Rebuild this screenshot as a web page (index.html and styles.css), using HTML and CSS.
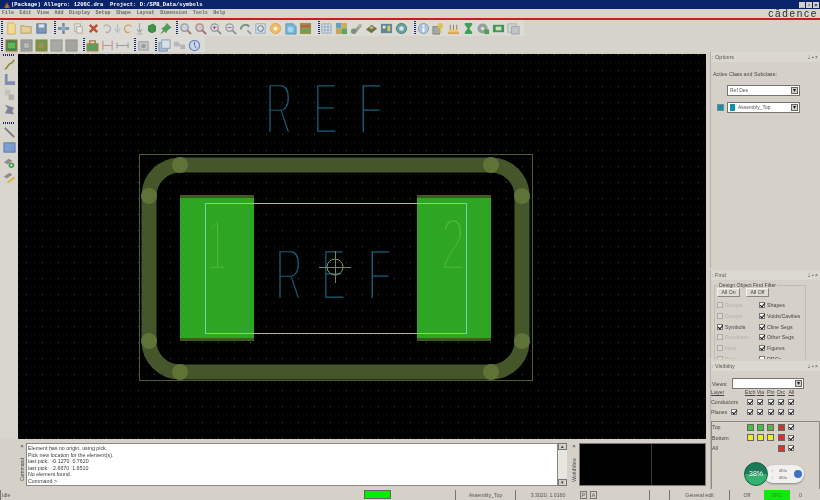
FILE: index.html
```html
<!DOCTYPE html>
<html lang="en">
<head>
<meta charset="utf-8">
<title>Allegro</title>
<link rel="stylesheet" href="styles.css">
</head>
<body>
<div class="app">
  <div class="title">
    <svg class="logo" viewBox="0 0 10 9"><path d="M1 8 5 1l4 7z" fill="#c8402c"/><path d="M3 8 5 4l2 4z" fill="#4caf50"/></svg>
    <span class="title-text">(Package) Allegro: 1206C.dra &nbsp;Project: D:/SPB_Data/symbols</span>
    <span class="winbtns"><i class="wb">_</i><i class="wb">▫</i><i class="wb">×</i></span>
  </div>
  <div class="menu">
    <span class="m">File</span><span class="m">Edit</span><span class="m">View</span><span class="m">Add</span><span class="m">Display</span><span class="m">Setup</span><span class="m">Shape</span><span class="m">Layout</span><span class="m">Dimension</span><span class="m">Tools</span><span class="m">Help</span>
    <span class="cadence">cādence</span>
  </div>

  <div class="bar">
    <div class="tools">
      <i class="grip g0"></i>
      <svg class="ic" viewBox="0 0 14 14"><path d="M3 1h6l2 2v10H3z" fill="#f3dc8c" stroke="#c9a750"/></svg>
      <svg class="ic" viewBox="0 0 14 14"><path d="M1 4h4l1 1h6v7H1z" fill="#e9cf8e" stroke="#a99668"/></svg>
      <svg class="ic" viewBox="0 0 14 14"><rect x="2" y="2" width="10" height="10" fill="#6f8fb5" stroke="#4d6b93"/><rect x="4" y="2.500" width="6" height="3.500" fill="#dfe6ee"/></svg>
      <i class="grip"></i>
      <svg class="ic" viewBox="0 0 14 14"><path d="M7 1v12M1 7h12" stroke="#5f7f9f" stroke-width="2.500"/><circle cx="7" cy="7" r="2.500" fill="#8fa8c0"/></svg>
      <svg class="ic" viewBox="0 0 14 14"><rect x="3" y="2" width="6" height="8" fill="#ece9e2" stroke="#a8a59c"/><rect x="5" y="5" width="6" height="7" fill="#ece9e2" stroke="#a8a59c"/></svg>
      <svg class="ic" viewBox="0 0 14 14"><path d="M3 3l8 8M11 3l-8 8" stroke="#b8401e" stroke-width="2.600"/></svg>
      <svg class="ic n" viewBox="0 0 12 14"><path d="M3 5a4 4 0 1 1 2 6" fill="none" stroke="#a9adb0" stroke-width="1.500"/></svg>
      <svg class="ic n" viewBox="0 0 12 14"><path d="M6 2v7M3 7l3 4 3-4" fill="none" stroke="#b3b8bd" stroke-width="1.300"/></svg>
      <svg class="ic n" viewBox="0 0 12 14"><path d="M9 5a4 4 0 1 0-2 6" fill="none" stroke="#d49b58" stroke-width="1.500"/></svg>
      <svg class="ic n" viewBox="0 0 12 14"><path d="M6 1v9M3 8l3 3 3-3M3 13h6" fill="none" stroke="#98a2ac" stroke-width="1.200"/></svg>
      <svg class="ic n2" viewBox="0 0 14 14"><path d="M3 4l5-2 3 2v6l-4 2-4-2z" fill="#2d8f3b" stroke="#1d6a2a"/></svg>
      <svg class="ic n2" viewBox="0 0 14 14"><path d="M8 1l5 5-2 1-3 3-1 2-2-2-4 3 3-4-2-2 2-1 3-3z" fill="#3c9a46" stroke="#2a6f33" stroke-width=".5"/></svg>
      <i class="grip g1"></i>
      <svg class="ic" viewBox="0 0 14 14"><circle cx="6" cy="6" r="4" fill="#cdd3da" stroke="#8b93a0" stroke-width="1.400"/><path d="M9 9l4 4" stroke="#9c6f6a" stroke-width="2"/></svg>
      <svg class="ic" viewBox="0 0 14 14"><circle cx="6" cy="6" r="4" fill="#d9c3c7" stroke="#a0808a" stroke-width="1.400"/><path d="M9 9l4 4" stroke="#9c5f6a" stroke-width="2"/></svg>
      <svg class="ic" viewBox="0 0 14 14"><circle cx="6" cy="6" r="4" fill="#d7dce0" stroke="#8a96a3" stroke-width="1.400"/><path d="M4 6h4M6 4v4" stroke="#a34" stroke-width=".9"/><path d="M9 9l4 4" stroke="#7d8a9a" stroke-width="2"/></svg>
      <svg class="ic" viewBox="0 0 14 14"><circle cx="6" cy="6" r="4" fill="#d7dce0" stroke="#8a96a3" stroke-width="1.400"/><path d="M4 6h4" stroke="#a34" stroke-width=".9"/><path d="M9 9l4 4" stroke="#7d8a9a" stroke-width="2"/></svg>
      <svg class="ic" viewBox="0 0 14 14"><path d="M2 8a5 5 0 0 1 9-3" fill="none" stroke="#6f8a7a" stroke-width="2"/><path d="M9 9l4 4" stroke="#8a96a3" stroke-width="2"/></svg>
      <svg class="ic" viewBox="0 0 14 14"><rect x="2" y="2" width="10" height="10" fill="#dfe4e8" stroke="#8ca0b6"/><circle cx="7" cy="7" r="3" fill="none" stroke="#5f7f9f" stroke-width="1.200"/></svg>
      <svg class="ic" viewBox="0 0 14 14"><circle cx="7" cy="7" r="5.500" fill="#efbd62" stroke="#d89a3e"/><circle cx="7" cy="7" r="2" fill="#fff3d9"/></svg>
      <svg class="ic" viewBox="0 0 14 14"><path d="M2 2h8l3 3v8H2z" fill="#6fb2d8" stroke="#4c8db4"/><circle cx="7" cy="8" r="3" fill="#a8d7ea"/></svg>
      <svg class="ic" viewBox="0 0 14 14"><rect x="1" y="1" width="12" height="12" fill="#8d8f3c"/><rect x="2" y="3" width="10" height="3" fill="#b8543c"/><rect x="2" y="8" width="10" height="3" fill="#5e9c48"/></svg>
      <i class="grip g2"></i>
      <svg class="ic n3" viewBox="0 0 14 14"><path d="M2 2h10v10H2zM5.300 2v10M8.600 2v10M2 5.300h10M2 8.600h10" fill="#d9e3ea" stroke="#7d9ab3" stroke-width=".8"/></svg>
      <svg class="ic" viewBox="0 0 14 14"><rect x="1" y="1" width="6" height="6" fill="#4d9fc4"/><rect x="7" y="1" width="6" height="6" fill="#d2a84a"/><rect x="1" y="7" width="6" height="6" fill="#c8a04a"/><rect x="7" y="7" width="6" height="6" fill="#4e9c5e"/></svg>
      <svg class="ic" viewBox="0 0 14 14"><path d="M2 11l9-9 1 3-6 7z" fill="#8c9a84"/><circle cx="4" cy="10" r="3" fill="#77866f"/><circle cx="11" cy="4" r="2" fill="#a8b2a0"/></svg>
      <svg class="ic" viewBox="0 0 14 14"><path d="M1 8l6-5 6 4-6 5z" fill="#5c6b3d"/><path d="M4 6l3-2 3 2-3 2z" fill="#b8a76a"/></svg>
      <svg class="ic" viewBox="0 0 14 14"><rect x="1" y="2" width="12" height="10" fill="#4f7f8f"/><rect x="3" y="4" width="3" height="3" fill="#e6e6e0"/><rect x="8" y="4" width="3" height="6" fill="#d8c55c"/></svg>
      <svg class="ic" viewBox="0 0 14 14"><circle cx="7" cy="7" r="5.500" fill="#5d9e9a" stroke="#37716e"/><circle cx="7" cy="7" r="2.500" fill="#d8e8e6"/></svg>
      <i class="grip g3"></i>
      <svg class="ic" viewBox="0 0 14 14"><circle cx="7" cy="7" r="5.500" fill="#a9bfdc" stroke="#7c97bb"/><rect x="6" y="3" width="2" height="2" fill="#fff"/><rect x="6" y="6" width="2" height="5" fill="#fff"/></svg>
      <svg class="ic" viewBox="0 0 14 14"><rect x="1" y="5" width="7" height="8" fill="#9ba69a" stroke="#6f7a6f"/><circle cx="9" cy="4" r="3" fill="#e3bb4a"/><rect x="8" y="6" width="2" height="6" fill="#e3bb4a"/></svg>
      <svg class="ic" viewBox="0 0 14 14"><path d="M1 11h12v2H1z" fill="#d89a38"/><path d="M2 8h10v3H2z" fill="#f0c466"/><path d="M3 3h1v5H3zM6.500 3h1v5h-1zM10 3h1v5h-1z" fill="#8a7240"/></svg>
      <svg class="ic" viewBox="0 0 14 14"><path d="M3 1h8v2L8 7l3 4v2H3v-2l3-4-3-4z" fill="#2f9a52"/></svg>
      <svg class="ic" viewBox="0 0 14 14"><circle cx="6" cy="7" r="5.500" fill="#8d9a97"/><circle cx="6" cy="7" r="2" fill="#d8dedc"/><rect x="8" y="8" width="5" height="5" fill="#3e9a4a"/></svg>
      <svg class="ic" viewBox="0 0 14 14"><rect x="1" y="3" width="12" height="8" fill="#2e8f50"/><rect x="4" y="5" width="6" height="4" fill="#c8e6b8"/></svg>
      <svg class="ic" viewBox="0 0 14 14"><rect x="1" y="2" width="9" height="9" fill="#d3d5d6" stroke="#a6a9ac"/><rect x="5" y="5" width="8" height="8" fill="#bfc3c6" stroke="#989c9f"/></svg>
    </div>
  </div>
  <div class="bar bar2">
    <div class="tools">
      <i class="grip g0"></i>
      <svg class="ic" viewBox="0 0 14 14"><rect x="1" y="1" width="12" height="12" fill="#2f7f3a" stroke="#b06a32"/><rect x="3" y="4" width="8" height="6" fill="#58b044"/></svg>
      <svg class="ic" viewBox="0 0 14 14"><rect x="1" y="1" width="12" height="12" fill="#9a9c98" stroke="#84867f"/><rect x="4" y="4" width="6" height="6" fill="#b8bab6" stroke="#8a8c88"/></svg>
      <svg class="ic" viewBox="0 0 14 14"><rect x="1" y="1" width="12" height="12" fill="#4e9a3c" stroke="#8d7a38"/><rect x="4" y="4" width="6" height="6" fill="#7f9a48" stroke="#c06a3a"/></svg>
      <svg class="ic" viewBox="0 0 14 14"><rect x="1" y="1" width="12" height="12" fill="#a3a5a1" stroke="#8d8f8b"/></svg>
      <svg class="ic" viewBox="0 0 14 14"><rect x="1" y="1" width="12" height="12" fill="#9d9f9b" stroke="#888a86"/></svg>
      <i class="grip g4"></i>
      <svg class="ic" viewBox="0 0 14 14"><path d="M1 5h12v8H1z" fill="#4f9950" stroke="#b87338"/><path d="M4 5V2h6v3" fill="none" stroke="#a86a38" stroke-width="1.400"/></svg>
      <svg class="ic" viewBox="0 0 14 14"><path d="M2 2v10M12 2v10M2 7h10" stroke="#c08a8a" stroke-width="1.200"/></svg>
      <svg class="ic" viewBox="0 0 14 14"><path d="M1 4v6M13 4v6M1 7h12" stroke="#8d97a6" stroke-width="1.200"/></svg>
      <i class="grip g4"></i>
      <svg class="ic" viewBox="0 0 14 14"><rect x="2" y="3" width="10" height="9" fill="#c2c6c9" stroke="#8d9296"/><circle cx="7" cy="7.500" r="2.500" fill="#8f979e"/></svg>
      <i class="grip g4"></i>
      <svg class="ic" viewBox="0 0 14 14"><rect x="1" y="4" width="9" height="9" fill="#a9bcd2" stroke="#6f8aab"/><rect x="4" y="1" width="9" height="9" fill="#d8e0ea" stroke="#7e96b3"/></svg>
      <svg class="ic" viewBox="0 0 14 14"><rect x="1" y="3" width="5" height="5" fill="#adb4ba"/><rect x="8" y="6" width="5" height="5" fill="#b9aeb2"/><path d="M6 5l2 3" stroke="#888"/></svg>
      <svg class="ic" viewBox="0 0 14 14"><circle cx="7" cy="7" r="5.500" fill="#c8d6ea" stroke="#5f84b8" stroke-width="1.400"/><path d="M7 3v4l2 3" fill="none" stroke="#3f66a0"/></svg>
    </div>
  </div>

  <div class="main">
    <div class="left-area">
      <div class="work">
        <div class="side">
          <i class="hgrip"></i>
          <svg class="sic" viewBox="0 0 14 14"><path d="M2 12c3-1 3-5 6-6s3-3 4-4" fill="none" stroke="#8f8a3a" stroke-width="1.800"/></svg>
          <svg class="sic" viewBox="0 0 14 14"><path d="M2 1h3v8h8v4H2z" fill="#7f8fb0"/></svg>
          <svg class="sic" viewBox="0 0 14 14"><rect x="2" y="2" width="6" height="6" fill="#c0c2be"/><rect x="6" y="7" width="6" height="6" fill="#aeb0ac"/></svg>
          <svg class="sic" viewBox="0 0 14 14"><path d="M2 2l10 3-2 4 2 3-10-1 3-5z" fill="#7d8296"/></svg>
          <i class="hgrip hg2"></i>
          <svg class="sic" viewBox="0 0 14 14"><path d="M2 2l10 10" stroke="#787a80" stroke-width="2"/></svg>
          <svg class="sic" viewBox="0 0 14 14"><rect x="1" y="2" width="12" height="10" fill="#7d9dd0" stroke="#5a7aa8"/></svg>
          <svg class="sic" viewBox="0 0 14 14"><path d="M1 7l5-4 4 2-5 4z" fill="#8f8a8c"/><circle cx="9" cy="10" r="3" fill="#43a04f"/><circle cx="9" cy="10" r="1" fill="#fff"/></svg>
          <svg class="sic" viewBox="0 0 14 14"><path d="M1 6l6-4 3 2-6 4z" fill="#8f8a8c"/><path d="M4 12l8-6 1 2-7 5z" fill="#d8b63c"/></svg>
        </div>
        <svg class="canvas" viewBox="18 54 688 385">
          <defs>
            <pattern id="fine" x="2" y="6" width="8" height="8" patternUnits="userSpaceOnUse"><rect width="1" height="1" fill="#202a22"/></pattern>
            <pattern id="coarse" x="10" y="6" width="16" height="16" patternUnits="userSpaceOnUse"><rect width="1" height="1" fill="#46544a"/></pattern>
          </defs>
          <rect x="18" y="54" width="688" height="385" fill="#000"/>
          <rect x="18" y="54" width="688" height="385" fill="url(#fine)"/>
          <rect x="18" y="54" width="688" height="385" fill="url(#coarse)"/>
          <rect x="139.500" y="154.500" width="393" height="226" fill="none" stroke="#4a5d38"/>
          <rect x="149" y="165" width="373" height="207" rx="31" fill="none" stroke="#45572a" stroke-width="15"/>
          <g fill="#5f7337">
            <circle cx="180" cy="165" r="8"/><circle cx="149" cy="196" r="8"/>
            <circle cx="491" cy="165" r="8"/><circle cx="522" cy="196" r="8"/>
            <circle cx="149" cy="341" r="8"/><circle cx="180" cy="372" r="8"/>
            <circle cx="491" cy="372" r="8"/><circle cx="522" cy="341" r="8"/>
          </g>
          <rect x="180" y="195" width="74" height="146" fill="#3f5c1d"/>
          <rect x="417" y="195" width="74" height="146" fill="#3f5c1d"/>
          <rect x="180" y="198" width="74" height="140" fill="#2fa524"/>
          <rect x="417" y="198" width="74" height="140" fill="#2fa524"/>
          <rect x="205.500" y="203.500" width="261" height="130" fill="none" stroke="#6fd8a0"/>
          <text class="pin" x="207" y="270" textLength="20" lengthAdjust="spacingAndGlyphs">1</text>
          <text class="pin" x="441" y="270" textLength="24" lengthAdjust="spacingAndGlyphs">2</text>
          <text class="ref" x="265" y="134" textLength="28" lengthAdjust="spacingAndGlyphs">R</text>
          <text class="ref" x="313" y="134" textLength="25" lengthAdjust="spacingAndGlyphs">E</text>
          <text class="ref" x="358" y="134" textLength="25" lengthAdjust="spacingAndGlyphs">F</text>
          <text class="ref r2" x="275" y="300" textLength="28" lengthAdjust="spacingAndGlyphs">R</text>
          <text class="ref r2" x="321" y="300" textLength="25" lengthAdjust="spacingAndGlyphs">E</text>
          <text class="ref r2" x="367" y="300" textLength="25" lengthAdjust="spacingAndGlyphs">F</text>
          <circle cx="335" cy="267" r="8" fill="none" stroke="#7d9c63"/>
          <path d="M319 267.500h32M335.500 251v32" stroke="#6f8a55"/>
        </svg>
      </div>
      <div class="console">
        <div class="vcap"><span class="x">×</span><span class="vt">Command</span></div>
        <div class="log">Element has no origin, using pick.<br>Pick new location for the element(s).<br>last pick: &nbsp;-0.1270 &nbsp;0.7620<br>last pick: &nbsp;&nbsp;2.6670 &nbsp;1.6510<br>No element found.<br>Command &gt;</div>
        <div class="scroll"><i class="sb">▴</i><i class="sb">▾</i></div>
        <div class="vcap vcap2"><span class="x">×</span><span class="vt">WorldView</span></div>
        <div class="world"><i class="vline"></i></div>
      </div>
    </div>
    <div class="panels">
      <section class="panel p-opt">
        <header class="ph"><span>: Options</span><span class="pb">⇣ ▪ ×</span></header>
        <p class="active">Active Class and Subclass:</p>
        <div class="sel s1">Ref Des<i class="ar">▾</i></div>
        <div class="selrow"><i class="swatch"></i><div class="sel s2"><i class="chip"></i>Assembly_Top<i class="ar">▾</i></div></div>
      </section>
      <section class="panel p-find">
        <header class="ph"><span>: Find</span><span class="pb">⇣ ▪ ×</span></header>
        <fieldset class="filter">
          <legend>Design Object Find Filter</legend>
          <div class="btns"><span class="btn">All On</span><span class="btn">All Off</span></div>
          <div class="fgrid">
            <label class="dis"><i class="cb"></i>Groups</label><label><i class="cb on"></i>Shapes</label>
            <label class="dis"><i class="cb"></i>Comps</label><label><i class="cb on"></i>Voids/Cavities</label>
            <label><i class="cb on"></i>Symbols</label><label><i class="cb on"></i>Cline Segs</label>
            <label class="dis"><i class="cb"></i>Functions</label><label><i class="cb on"></i>Other Segs</label>
            <label class="dis"><i class="cb"></i>Nets</label><label><i class="cb on"></i>Figures</label>
            <label class="dis"><i class="cb"></i>Pins</label><label><i class="cb"></i>DRCs</label>
          </div>
        </fieldset>
      </section>
      <section class="panel p-vis">
        <header class="ph"><span>: Visibility</span><span class="pb">⇣ ▪ ×</span></header>
        <div class="views">Views:<div class="sel s3"><i class="ar">▾</i></div></div>
        <div class="vgrid">
          <u class="lay">Layer</u><u>Etch</u><u>Via</u><u>Pin</u><u>Drc</u><u>All</u>
          <span class="lay">Conductors</span><i class="cb on"></i><i class="cb on"></i><i class="cb on"></i><i class="cb on"></i><i class="cb on"></i>
          <span class="lay">Planes<i class="cb on"></i></span><i class="cb on"></i><i class="cb on"></i><i class="cb on"></i><i class="cb on"></i><i class="cb on"></i>
        </div>
        <div class="layers">
          <span class="lay">Top</span><i class="k g"></i><i class="k g"></i><i class="k g"></i><i class="k r"></i><i class="cb on"></i>
          <span class="lay">Bottom</span><i class="k y"></i><i class="k y"></i><i class="k y"></i><i class="k r"></i><i class="cb on"></i>
          <span class="lay">All</span><i></i><i></i><i></i><i class="k r"></i><i class="cb on"></i>
        </div>
        <div class="widget">
          <div class="pill"><span class="up">↑<br>↓</span><span class="kb">0K/s<br>0K/s</span><i class="dot"></i></div>
          <div class="gauge">38%</div>
        </div>
      </section>
    </div>
  </div>

  <div class="status">
    <span class="st st-idle">Idle</span>
    <span class="st st-g"><i class="led"></i></span>
    <span class="st st-lay">Assembly_Top</span>
    <span class="st st-xy">3.3020, 1.0160</span>
    <span class="st st-p"><i class="pa">P</i><i class="pa">A</i></span>
    <span class="st st-e"></span>
    <span class="st st-mode">General edit</span>
    <span class="st st-off">Off</span>
    <span class="st st-drc">DRC</span>
    <span class="st st-z">0</span>
  </div>
</div>
</body>
</html>
```

FILE: styles.css
```css
* { box-sizing: border-box; }
html, body { margin: 0; padding: 0; }
body { width: 820px; height: 500px; overflow: hidden; background: #d5d1c8; font-family: "Liberation Sans", Arial, sans-serif; color: #333; }
i { font-style: normal; }
.app { width: 820px; height: 500px; display: flex; flex-direction: column; overflow: hidden; position: relative; filter: blur(.35px); }

.title { height: 9px; background: #0a246a; color: #fff; display: flex; align-items: center; font: bold 5.500px/9px "Liberation Mono", monospace; padding-left: 3px; }
.logo { width: 8px; height: 8px; flex: none; }
.title-text { flex: 1; white-space: pre; }
.winbtns { display: flex; gap: 1px; margin-right: 1px; }
.wb { width: 6px; height: 6px; background: #d5d1c8; color: #222; font: bold 6px/6px "Liberation Sans", sans-serif; text-align: center; }

.menu { height: 11px; border-bottom: 2px solid #c4201c; background: #d8d5cc; display: flex; align-items: center; padding-left: 2px; font: bold 5px/9px "Liberation Mono", monospace; color: #666; position: relative; }
.m { margin-right: 5.500px; }
.cadence { margin-left: auto; margin-right: 2px; font: 10px/9px "Liberation Sans", sans-serif; letter-spacing: 1.700px; color: #2a2a2a; }

.bar { height: 16px; background: #d6d3ca; display: flex; }
.bar2 .tools { padding-top: 2px; }
.tools { display: flex; align-items: center; height: 16px; background: #dddbd5; padding-right: 3px; }
.grip { width: 2px; height: 14px; flex: none; margin-left: 5px; background-image: repeating-linear-gradient(to bottom, #1a2a6a 0 1px, transparent 1px 2px); }
.g0 { margin-left: 1px; }
.g1 { margin-left: 3px; }
.g2 { margin-left: 5px; }
.g3 { margin-left: 5px; }
.g4 { margin-left: 4px; }
.ic { width: 13px; height: 13px; margin: 0 1px; flex: none; opacity: .9; }
.n { width: 11px; margin: 0; }
.n2 { width: 12px; margin: 0 1px; }
.n3 { margin-left: 0; }
.g0 + .ic { margin-left: 2px; }

.main { flex: 1; display: flex; min-height: 0; }
.left-area { width: 706px; flex: none; display: flex; flex-direction: column; }
.work { height: 387px; display: flex; padding-top: 2px; flex: none; }
.side { width: 18px; flex: none; display: flex; flex-direction: column; align-items: center; background: #d8d5cd; }
.hgrip { width: 12px; height: 2px; margin: 0 0 2px; flex: none; background-image: repeating-linear-gradient(to right, #1a2a6a 0 1px, transparent 1px 2px); }
.hg2 { margin-top: 4px; }
.sic { width: 13px; height: 13px; margin-bottom: 2px; flex: none; }
.canvas { width: 688px; height: 385px; display: block; flex: none; }
.ref { font: 74px "Liberation Sans", sans-serif; fill: #16607a; stroke: #000; stroke-width: 4.400px; paint-order: fill stroke; }
.pin { font: 74px "Liberation Sans", sans-serif; fill: #4fbb42; stroke: #2fa524; stroke-width: 4.400px; paint-order: fill stroke; }

.console { flex: 1; display: flex; padding: 4px 0 3px 18px; }
.vcap { width: 8px; flex: none; display: flex; flex-direction: column; align-items: center; font-size: 5px; color: #444; background: #d5d1c8; }
.x { font-size: 6px; line-height: 7px; }
.vt { writing-mode: vertical-rl; transform: rotate(180deg); margin-top: 8px; font-size: 5px; }
.log { width: 532px; background: #fff; border: 1px solid #8d8a83; font-size: 5.300px; line-height: 6.500px; padding: 1px 0 0 1px; color: #3a3a3a; flex: none; white-space: nowrap; }
.scroll { width: 9px; flex: none; display: flex; flex-direction: column; justify-content: space-between; background: #e7e5df; }
.sb { height: 7px; background: #d5d1c8; border: 1px solid #777; font-size: 5px; line-height: 5px; text-align: center; }
.vcap2 { margin-left: 3px; }
.world { flex: 1; background: #000; margin-left: 1px; border: 1px solid #777; display: flex; justify-content: center; }
.vline { width: 1px; background: #3b3b36; margin-left: 17px; }

.panels { width: 114px; flex: none; display: flex; flex-direction: column; padding-left: 4px; font-size: 5.300px; color: #444; gap: 2px; }
.panel { border-left: 1px solid #b6b2a9; overflow: hidden; position: relative; flex: none; }
.p-opt { height: 216px; }
.p-find { height: 89px; }
.p-vis { height: 128px; }
.ph { height: 10px; display: flex; justify-content: space-between; align-items: center; background: #dbd8d0; padding: 0 2px 0 1px; font-size: 5.500px; color: #555; }
.pb { font-size: 5px; }
.active { margin: 9px 0 8px 2px; font-size: 5.300px; line-height: 6px; }
.sel { background: #fff; border: 1px solid #77746d; font-size: 5px; line-height: 9px; height: 11px; padding-left: 2px; position: relative; display: flex; align-items: center; color: #555; }
.s1 { width: 73px; margin-left: 16px; }
.selrow { display: flex; align-items: center; margin: 6px 0 0 6px; gap: 3px; }
.swatch { width: 7px; height: 7px; background: #1f8da0; border: 1px solid #6a8f96; }
.s2 { width: 73px; height: 11px; }
.chip { width: 5px; height: 7px; background: #0f8fa8; margin-right: 3px; }
.ar { margin-left: auto; width: 7px; height: 7px; background: #d5d1c8; border: 1px solid #666; font-size: 6px; line-height: 5px; text-align: center; margin-right: 1px; color: #111; }

.filter { border: 1px solid #c0bcb3; margin: 2px 0 0 3px; padding: 0 0 0 2px; width: 92px; height: 90px; }
legend { font-size: 5.200px; padding: 0 1px; margin-left: 1px; line-height: 6px; }
.btns { display: flex; gap: 6px; margin-top: 0; }
.btn { width: 23px; height: 9px; font-size: 5.200px; line-height: 7px; text-align: center; background: #dedbd3; border: 1px solid #8a877f; border-top-color: #f5f3ee; border-left-color: #f5f3ee; }
.fgrid { display: grid; grid-template-columns: 42px 1fr; grid-auto-rows: 10.700px; margin-top: 3px; font-size: 5.300px; white-space: nowrap; }
.fgrid label { display: flex; align-items: center; gap: 2px; }
.dis { color: #b3b0a8; }
.cb { display: inline-block; width: 6px; height: 6px; background: #fff; border: 1px solid #777; position: relative; flex: none; vertical-align: middle; }
.on::after { content: ""; position: absolute; left: 1px; top: -1px; width: 2px; height: 4px; border: solid #111; border-width: 0 1px 1px 0; transform: rotate(40deg); }
.dis .cb { background: #dcd9d1; border-color: #aaa; }

.views { display: flex; align-items: center; height: 11px; margin: 7px 0 0 0; font-size: 5.300px; padding-left: 1px; }
.s3 { width: 72px; margin-left: 4px; }
.vgrid { display: grid; grid-template-columns: 34px repeat(5, 10.300px); grid-auto-rows: 10px; align-items: center; justify-items: center; margin-top: -2px; font-size: 5.300px; }
.lay { justify-self: start; padding-left: 0; white-space: nowrap; }
.lay .cb { margin-left: 4px; }
.layers { margin-top: 4px; border: 1px solid #8d8a83; height: 70px; display: grid; grid-template-columns: 33px repeat(5, 10.300px); grid-auto-rows: 10.500px; align-items: center; justify-items: center; font-size: 5.300px; }
.k { width: 7px; height: 7px; border: 1px solid #666; }
.g { background: #44c044; }
.y { background: #ecec20; }
.r { background: #d83030; }
.widget { position: absolute; left: 33px; bottom: 2px; width: 64px; height: 26px; }
.gauge { position: absolute; left: 0; top: 1px; width: 24px; height: 24px; border-radius: 50%; background: linear-gradient(#1c7a58 0 48%, #34b070 52%); border: 1px solid #0f5f44; color: #fff; font-size: 7px; line-height: 22px; text-align: center; }
.pill { position: absolute; left: 20px; top: 4px; width: 40px; height: 18px; background: #f1f0ee; border-radius: 9px; display: flex; align-items: center; box-shadow: 0 1px 2px #888; font-size: 4px; line-height: 7px; padding-left: 7px; }
.up { color: #b33; margin-right: 6px; }
.kb { color: #555; }
.dot { position: absolute; right: 2px; top: 5px; width: 8px; height: 8px; border-radius: 50%; background: #3a73c0; }

.status { height: 11px; flex: none; display: flex; align-items: center; font-size: 5.200px; color: #555; background: #d5d1c8; }
.st { height: 10px; line-height: 10px; border-left: 1px solid #777; flex: none; white-space: nowrap; text-align: center; }
.st-idle { width: 364px; text-align: left; padding-left: 1px; }
.st-g { width: 91px; border: 0; text-align: left; }
.led { display: block; width: 27px; height: 9px; background: #00f000; border: 1px solid #666; }
.st-lay { width: 60px; }
.st-xy { width: 65px; }
.st-p { width: 69px; text-align: left; border: 0; }
.pa { display: inline-block; width: 7px; height: 8px; line-height: 7px; border: 1px solid #777; margin-right: 3px; text-align: center; }
.st-e { width: 20px; }
.st-mode { width: 60px; }
.st-off { width: 35px; }
.st-drc { width: 26px; background: #10e810; color: #3d8a30; border: 0; }
.st-z { flex: 1; text-align: left; padding-left: 9px; border: 0; }
```
